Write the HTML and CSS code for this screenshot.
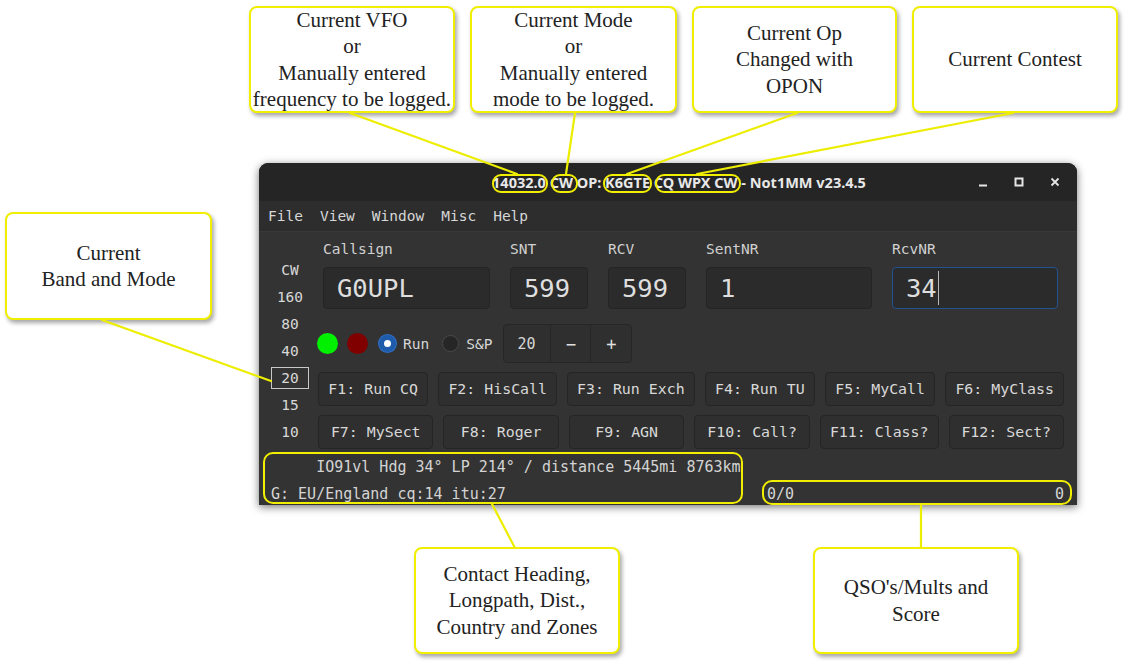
FILE: index.html
```html
<!DOCTYPE html>
<html lang="en">
<head>
<meta charset="utf-8">
<title>Not1MM annotated</title>
<link rel="stylesheet" href="styles.css">
</head>
<body>
<div class="canvas">

  <div class="callout c-vfo">Current VFO<br>or<br>Manually entered<br>frequency to be logged.</div>
  <div class="callout c-mode">Current Mode<br>or<br>Manually entered<br>mode to be logged.</div>
  <div class="callout c-op">Current Op<br>Changed with<br>OPON</div>
  <div class="callout c-contest">Current Contest</div>
  <div class="callout c-band">Current<br>Band and Mode</div>
  <div class="callout c-contact">Contact Heading,<br>Longpath, Dist.,<br>Country and Zones</div>
  <div class="callout c-qso">QSO's/Mults and<br>Score</div>

  <div class="app">
    <div class="titlebar">
      <div class="tb-side"></div>
      <div class="title">14032.0 CW OP: K6GTE CQ WPX CW - Not1MM v23.4.5</div>
      <div class="tb-side tb-ctl">
        <span class="wbtn"><svg width="10" height="10" viewBox="0 0 10 10"><path d="M1 8.5h8" stroke="#e6e6e6" stroke-width="2"/></svg></span>
        <span class="wbtn"><svg width="10" height="10" viewBox="0 0 10 10"><rect x="1.5" y="1.5" width="7" height="7" fill="none" stroke="#e6e6e6" stroke-width="2"/></svg></span>
        <span class="wbtn"><svg width="10" height="10" viewBox="0 0 10 10"><path d="M1.5 1.5l7 7M8.5 1.5l-7 7" stroke="#e6e6e6" stroke-width="1.8"/></svg></span>
      </div>
    </div>

    <div class="menubar">
      <span class="menu">File</span>
      <span class="menu">View</span>
      <span class="menu">Window</span>
      <span class="menu">Misc</span>
      <span class="menu">Help</span>
    </div>

    <div class="appbody">
      <div class="upper">
        <div class="bands">
          <div class="band">CW</div>
          <div class="band">160</div>
          <div class="band">80</div>
          <div class="band">40</div>
          <div class="band"><span class="band-sel">20</span></div>
          <div class="band">15</div>
          <div class="band">10</div>
        </div>

        <div class="main">
          <div class="fields">
            <div class="lbl">Callsign</div>
            <div class="lbl">SNT</div>
            <div class="lbl">RCV</div>
            <div class="lbl">SentNR</div>
            <div class="lbl">RcvNR</div>
            <div class="field">G0UPL</div>
            <div class="field">599</div>
            <div class="field">599</div>
            <div class="field">1</div>
            <div class="field focus">34<span class="caret"></span></div>
          </div>

          <div class="controls">
            <span class="dot dot-green"></span>
            <span class="dot dot-red"></span>
            <span class="radio radio-on"></span>
            <span class="rlabel">Run</span>
            <span class="radio"></span>
            <span class="rlabel">S&amp;P</span>
            <div class="spin">
              <span class="spin-val">20</span>
              <span class="spin-btn">&minus;</span>
              <span class="spin-btn spin-plus">+</span>
            </div>
          </div>

          <div class="fkeys">
            <div class="frow">
              <button class="fk">F1: Run CQ</button>
              <button class="fk">F2: HisCall</button>
              <button class="fk">F3: Run Exch</button>
              <button class="fk">F4: Run TU</button>
              <button class="fk">F5: MyCall</button>
              <button class="fk">F6: MyClass</button>
            </div>
            <div class="frow">
              <button class="fk">F7: MySect</button>
              <button class="fk">F8: Roger</button>
              <button class="fk">F9: AGN</button>
              <button class="fk">F10: Call?</button>
              <button class="fk">F11: Class?</button>
              <button class="fk">F12: Sect?</button>
            </div>
          </div>
        </div>
      </div>

      <div class="lower">
        <div class="info">
          <div class="info-line">     IO91vl Hdg 34° LP 214° / distance 5445mi 8763km</div>
          <div class="info-line">G: EU/England cq:14 itu:27</div>
        </div>
        <div class="score">
          <span>0/0</span>
          <span>0</span>
        </div>
      </div>
    </div>
  </div>

  <div class="hl h-freq"></div>
  <div class="hl h-mode"></div>
  <div class="hl h-op"></div>
  <div class="hl h-contest"></div>
  <div class="hl h-info"></div>
  <div class="hl h-score"></div>

  <svg class="leaders" width="1125" height="661" viewBox="0 0 1125 661">
    <g stroke="#eded00" stroke-width="2.2" stroke-linecap="round" fill="none">
      <path d="M350 113L517 174"/>
      <path d="M575 113L566 174"/>
      <path d="M797 113L627 174"/>
      <path d="M1013 113L697 174"/>
      <path d="M102 320L271 381"/>
      <path d="M492 504L515 548"/>
      <path d="M921 505L921 548"/>
    </g>
  </svg>
</div>
</body>
</html>
```

FILE: styles.css
```css
* { box-sizing: border-box; }

html, body {
  margin: 0;
  padding: 0;
  background: #ffffff;
}

.canvas {
  position: relative;
  width: 1125px;
  height: 661px;
  overflow: hidden;
  background: #ffffff;
}

/* ---------- callouts ---------- */
.callout {
  position: absolute;
  display: flex;
  align-items: center;
  justify-content: center;
  text-align: center;
  white-space: nowrap;
  background: #ffffff;
  border: 2.5px solid #f0ef00;
  border-radius: 8px;
  box-shadow: 2px 3px 4px rgba(0, 0, 0, 0.35);
  font-family: "Liberation Serif", "Times New Roman", serif;
  font-size: 21px;
  line-height: 26.5px;
  color: #222222;
  z-index: 3;
}
.c-vfo     { left: 249px; top: 6px;   width: 206px; height: 107px; }
.c-mode    { left: 470px; top: 6px;   width: 207px; height: 107px; }
.c-op      { left: 692px; top: 6px;   width: 205px; height: 107px; }
.c-contest { left: 912px; top: 6px;   width: 206px; height: 107px; }
.c-band    { left: 5px;   top: 212px; width: 207px; height: 108px; }
.c-contact { left: 414px; top: 547px; width: 206px; height: 107px; }
.c-qso     { left: 813px; top: 547px; width: 206px; height: 107px; }

/* ---------- app window ---------- */
.app {
  position: absolute;
  left: 259px;
  top: 163px;
  width: 818px;
  height: 342px;
  display: flex;
  flex-direction: column;
  background: #333333;
  border-radius: 9px 9px 0 0;
  box-shadow: 0 2px 9px rgba(0, 0, 0, 0.55);
  overflow: hidden;
  z-index: 1;
}

.titlebar {
  height: 38px;
  flex: none;
  display: grid;
  grid-template-columns: 1fr auto 1fr;
  align-items: center;
  background: #252525;
}
.title {
  padding-left: 22px;
  font-family: "Noto Sans", "DejaVu Sans", sans-serif;
  font-weight: 700;
  font-size: 14.5px;
  color: #e8e8e8;
  white-space: nowrap;
}
.tb-ctl {
  display: flex;
  justify-content: flex-end;
  padding-right: 4px;
}
.wbtn {
  width: 36px;
  height: 24px;
  display: flex;
  align-items: center;
  justify-content: center;
}

.menubar {
  height: 31px;
  flex: none;
  display: flex;
  align-items: center;
  padding-left: 0.5px;
  background: #2d2d2d;
  border-bottom: 1px solid #383838;
}
.menu {
  padding: 0 8.5px;
  font-family: "DejaVu Sans Mono", monospace;
  font-size: 14.5px;
  color: #d6d6d6;
}

.appbody {
  flex: 1;
  display: flex;
  flex-direction: column;
  padding: 8px 13px 0 11px;
  font-family: "DejaVu Sans Mono", monospace;
  color: #d6d6d6;
}

.upper {
  display: flex;
  gap: 8px;
}

.bands {
  width: 40px;
  flex: none;
  padding-top: 16.5px;
  display: flex;
  flex-direction: column;
}
.band {
  height: 27px;
  display: flex;
  align-items: center;
  justify-content: center;
  font-size: 14.5px;
  color: #d8d8d8;
}
.band-sel {
  display: flex;
  align-items: center;
  justify-content: center;
  width: 38px;
  height: 22px;
  border: 1px solid #c8c8c8;
}

.main {
  flex: 1;
  min-width: 0;
  display: flex;
  flex-direction: column;
}

.fields {
  display: grid;
  grid-template-columns: 167px 78px 78px 1fr 1fr;
  grid-template-rows: 18px 42px;
  column-gap: 20px;
  row-gap: 9px;
  padding: 0 6px 0 5px;
}
.lbl {
  font-size: 14.5px;
  line-height: 18px;
  color: #d0d0d0;
}
.field {
  display: flex;
  align-items: center;
  padding-left: 13px;
  background: #2b2b2b;
  border: 1px solid #242424;
  border-radius: 4px;
  font-size: 25.5px;
  color: #dedede;
}
.field.focus {
  border: 1.5px solid #23508f;
}
.caret {
  display: inline-block;
  width: 1px;
  height: 34px;
  margin-left: 1px;
  background: #b8b8b8;
}

.controls {
  display: flex;
  align-items: center;
  height: 39px;
  margin-top: 15px;
  margin-left: -1px;
}
.dot {
  width: 21px;
  height: 21px;
  border-radius: 50%;
  flex: none;
}
.dot-green { background: #00f000; margin-right: 9px; }
.dot-red   { background: #800000; margin-right: 11px; }
.radio {
  width: 17px;
  height: 17px;
  border-radius: 50%;
  flex: none;
  background: #262626;
  border: 1px solid #4a4a4a;
  margin-right: 7px;
}
.radio-on {
  background: #ffffff;
  border: 5px solid #1e5cab;
  box-shadow: 0 0 0 1px #2f6fc4;
}
.rlabel {
  font-size: 14.5px;
  color: #d6d6d6;
  margin-right: 13px;
}
.rlabel + .spin { margin-left: -2px; }

.spin {
  display: flex;
  height: 39px;
  width: 129px;
  border: 1px solid #262626;
  border-radius: 4px;
  background: #2f2f2f;
  overflow: hidden;
}
.spin-val {
  width: 47px;
  display: flex;
  align-items: center;
  padding-left: 13px;
  font-size: 15px;
  border-right: 1px solid #262626;
}
.spin-btn {
  width: 40px;
  display: flex;
  align-items: center;
  justify-content: center;
  font-size: 17px;
  color: #e0e0e0;
  border-right: 1px solid #262626;
}
.spin-plus {
  flex: 1;
  border-right: 0;
}

.fkeys {
  display: flex;
  flex-direction: column;
  gap: 9px;
  margin-top: 9px;
}
.frow {
  display: flex;
  gap: 10px;
}
.fk {
  flex: 1 1 0;
  height: 34px;
  padding: 0 9px;
  margin: 0;
  white-space: nowrap;
  background: #2f2f2f;
  border: 1px solid #252525;
  border-radius: 4px;
  font-family: "DejaVu Sans Mono", monospace;
  font-size: 14.9px;
  color: #d8d8d8;
}

.lower {
  display: flex;
  margin-top: 7px;
}
.info {
  width: 487px;
  flex: none;
  display: flex;
  flex-direction: column;
  gap: 5px;
}
.info-line {
  white-space: pre;
  font-size: 15px;
  line-height: 22px;
  color: #d4d4d4;
  padding-left: 1px;
}
.score {
  flex: 1;
  align-self: flex-end;
  display: flex;
  justify-content: space-between;
  padding-left: 10px;
  font-size: 15px;
  line-height: 22px;
  color: #d4d4d4;
}

/* ---------- yellow highlights ---------- */
.hl {
  position: absolute;
  border: 2px solid #f2ee00;
  z-index: 2;
}
.h-freq    { left: 492px; top: 174px; width: 56px;  height: 19px; border-radius: 9px; }
.h-mode    { left: 551px; top: 174px; width: 27px;  height: 19px; border-radius: 9px; }
.h-op      { left: 603px; top: 174px; width: 49px;  height: 19px; border-radius: 9px; }
.h-contest { left: 655px; top: 174px; width: 86px;  height: 19px; border-radius: 9px; }
.h-info    { left: 263px; top: 452px; width: 480px; height: 52px; border-radius: 10px; }
.h-score   { left: 762px; top: 480px; width: 310px; height: 25px; border-radius: 10px; }

.leaders {
  position: absolute;
  left: 0;
  top: 0;
  z-index: 4;
  pointer-events: none;
}
```
